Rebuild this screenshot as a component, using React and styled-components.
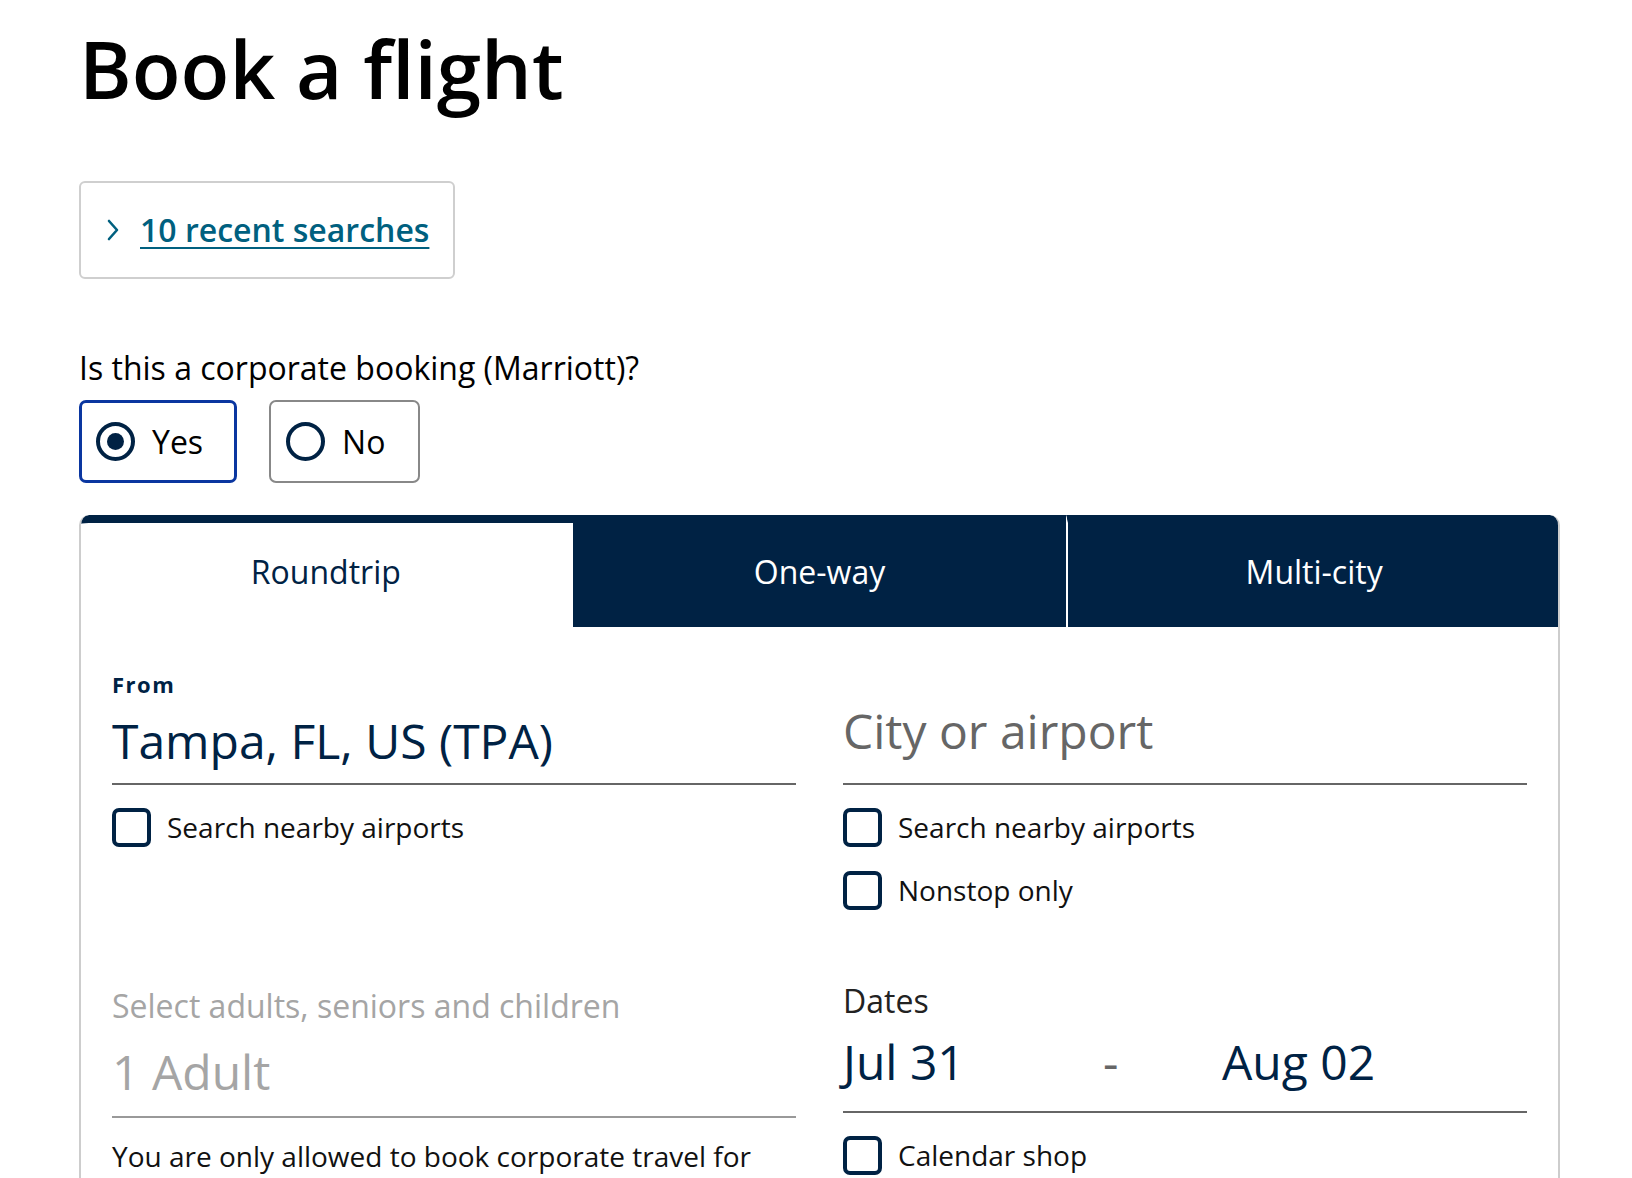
import React, { useState } from 'react'
import styled, { createGlobalStyle } from 'styled-components'

const navy = '#002244'

const GlobalStyle = createGlobalStyle`
  body {
    margin: 0;
    background: #fff;
    font-family: "Open Sans", "Liberation Sans", sans-serif;
    color: #000;
  }
`

const Page = styled.main`
  padding: 20px 72px 0 79px;
`
const Title = styled.h1`
  margin: 0;
  font-size: 80px;
  line-height: 96px;
  font-weight: 600;
  color: #000;
`
const RecentBox = styled.div`
  margin-top: 65px;
  width: 376px;
  height: 98px;
  box-sizing: border-box;
  border: 2px solid #cfcfcf;
  border-radius: 6px;
  display: flex;
  align-items: center;
  gap: 20px;
  padding-left: 25px;
`
const RecentLink = styled.a`
  font-size: 32px;
  line-height: 40px;
  font-weight: 600;
  color: #00607f;
  text-decoration: underline;
  text-decoration-thickness: 2px;
  text-underline-offset: 5px;
  cursor: pointer;
`
const Question = styled.p`
  margin: 67px 0 0;
  font-size: 32px;
  line-height: 44px;
  color: #000;
`
const RadioGroup = styled.div`
  margin-top: 10px;
  display: flex;
  gap: 32px;
`
const RadioBox = styled.label`
  height: 83px;
  box-sizing: border-box;
  display: flex;
  align-items: center;
  gap: 17px;
  padding: 0 ${(p) => (p.$selected ? 31 : 33)}px 0 ${(p) => (p.$selected ? 14 : 15)}px;
  border: ${(p) => (p.$selected ? '3px solid #0a36a0' : '2px solid #888')};
  border-radius: 7px;
  font-size: 32px;
  color: #000;
  cursor: pointer;
`
const RadioCircle = styled.span`
  width: 39px;
  height: 39px;
  box-sizing: border-box;
  border: 4px solid ${navy};
  border-radius: 50%;
  display: flex;
  align-items: center;
  justify-content: center;
  &::after {
    content: '';
    display: ${(p) => (p.$checked ? 'block' : 'none')};
    width: 17px;
    height: 17px;
    border-radius: 50%;
    background: ${navy};
  }
`
const Panel = styled.section`
  margin-top: 32px;
  border: 2px solid #cdcdcd;
  border-top: 0;
  border-radius: 10px 10px 0 0;
  overflow: hidden;
  min-height: 800px;
`
const TabRow = styled.div`
  display: grid;
  grid-template-columns: 1fr 1fr 1fr;
  height: 112px;
  margin: 0 -2px;
`
const Tab = styled.button`
  border: 0;
  border-left: ${(p) => (p.$divider ? '2px solid #fff' : '0')};
  border-top: 8px solid ${navy};
  background: ${(p) => (p.$active ? '#fff' : navy)};
  color: ${(p) => (p.$active ? navy : '#fff')};
  font-family: inherit;
  font-size: 32px;
  padding: 0 0 7px;
  cursor: pointer;
  &:first-child {
    border-top-left-radius: 10px;
  }
  &:last-child {
    border-top-right-radius: 10px;
  }
`
const Body = styled.div`
  display: grid;
  grid-template-columns: 1fr 1fr;
  column-gap: 47px;
  row-gap: 69px;
  align-items: start;
  padding: 42px 31px 0;
`
const Column = styled.div`
  display: flex;
  flex-direction: column;
  padding-top: ${(p) => p.$offset || 0}px;
`
const Field = styled.div`
  height: 116px;
  display: flex;
  flex-direction: column;
  justify-content: flex-end;
`
const SmallLabel = styled.div`
  font-size: 22px;
  line-height: 30px;
  font-weight: 700;
  letter-spacing: 1.5px;
  color: ${navy};
`
const FieldLabel = styled.div`
  font-size: 32px;
  line-height: 44px;
  color: ${(p) => p.$color || '#222'};
`
const Value = styled.div`
  margin-top: ${(p) => p.$gap || 0}px;
  padding-bottom: ${(p) => p.$pad || 10}px;
  border-bottom: 2px solid ${(p) => p.$line || '#666'};
  font-size: 48px;
  line-height: 64px;
  color: ${(p) => p.$color || navy};
`
const DateRow = styled.div`
  display: grid;
  grid-template-columns: 260px 119px 1fr;
`
const Dash = styled.span`
  color: #666;
`
const Checks = styled.div`
  margin-top: 23px;
  display: flex;
  flex-direction: column;
  gap: 24px;
`
const CheckRow = styled.label`
  display: flex;
  align-items: center;
  gap: 16px;
  font-size: 28px;
  line-height: 39px;
  color: #111;
  cursor: pointer;
`
const CheckBox = styled.span`
  width: 39px;
  height: 39px;
  box-sizing: border-box;
  border: 4px solid ${navy};
  border-radius: 7px;
  flex-shrink: 0;
`
const Note = styled.p`
  margin: 19px 0 0;
  font-size: 28px;
  line-height: 38px;
  color: #111;
`

const Chevron = () => (
  <svg width="14" height="22" viewBox="0 0 14 22" fill="none">
    <path d="M3 2 L11 11 L3 20" stroke="#00607f" strokeWidth="2.6" strokeLinecap="round" strokeLinejoin="round" />
  </svg>
)

const Check = ({ children }) => (
  <CheckRow>
    <CheckBox />
    {children}
  </CheckRow>
)

const App = () => {
  const [corporate, setCorporate] = useState(true)
  const [trip, setTrip] = useState(0)
  const tabs = ['Roundtrip', 'One-way', 'Multi-city']

  return (
    <Page>
      <GlobalStyle />
      <Title>Book a flight</Title>
      <RecentBox>
        <Chevron />
        <RecentLink>10 recent searches</RecentLink>
      </RecentBox>
      <Question>Is this a corporate booking (Marriott)?</Question>
      <RadioGroup>
        <RadioBox $selected={corporate} onClick={() => setCorporate(true)}>
          <RadioCircle $checked={corporate} />
          Yes
        </RadioBox>
        <RadioBox $selected={!corporate} onClick={() => setCorporate(false)}>
          <RadioCircle $checked={!corporate} />
          No
        </RadioBox>
      </RadioGroup>
      <Panel>
        <TabRow>
          {tabs.map((t, i) => (
            <Tab
              key={t}
              $active={trip === i}
              $divider={i > 0 && trip !== i && trip !== i - 1}
              onClick={() => setTrip(i)}
            >
              {t}
            </Tab>
          ))}
        </TabRow>
        <Body>
          <Column>
            <Field>
              <SmallLabel>From</SmallLabel>
              <Value $gap={10}>Tampa, FL, US (TPA)</Value>
            </Field>
            <Checks>
              <Check>Search nearby airports</Check>
            </Checks>
          </Column>
          <Column>
            <Field>
              <Value $pad={20} $color="#666">City or airport</Value>
            </Field>
            <Checks>
              <Check>Search nearby airports</Check>
              <Check>Nonstop only</Check>
            </Checks>
          </Column>
          <Column $offset={5}>
            <FieldLabel $color="#a5a5a5">Select adults, seniors and children</FieldLabel>
            <Value $gap={12} $pad={12} $color="#a5a5a5" $line="#999">1 Adult</Value>
            <Note>You are only allowed to book corporate travel for</Note>
          </Column>
          <Column>
            <FieldLabel>Dates</FieldLabel>
            <Value $gap={7} $pad={17}>
              <DateRow>
                <span>Jul 31</span>
                <Dash>-</Dash>
                <span>Aug 02</span>
              </DateRow>
            </Value>
            <Checks>
              <Check>Calendar shop</Check>
            </Checks>
          </Column>
        </Body>
      </Panel>
    </Page>
  )
}

export default App
